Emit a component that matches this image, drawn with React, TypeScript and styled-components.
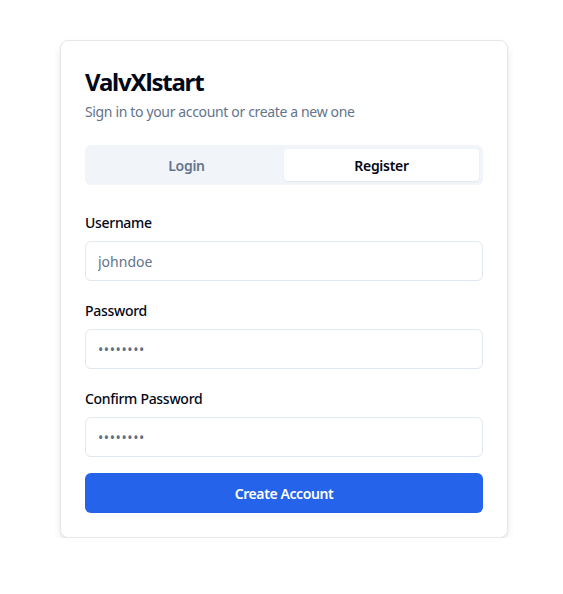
import React from "react";
import styled, { createGlobalStyle } from "styled-components";

const Global = createGlobalStyle`
  * { box-sizing: border-box; }
  html, body { margin: 0; padding: 0; background: #ffffff; }
  body { font-family: "Noto Sans", "Open Sans", sans-serif; color: #020817; }
`;

const Page = styled.div`
  padding: 40px 0 0 60px;
`;

const Card = styled.div`
  width: 448px;
  background: #ffffff;
  border: 1px solid #e5e7eb;
  border-radius: 8px;
  box-shadow: 0 4px 8px -1px rgba(15, 23, 42, 0.1), 0 2px 4px -2px rgba(15, 23, 42, 0.08);
  padding: 25px 24px 24px;
`;

const Title = styled.h1`
  margin: 0;
  font-size: 24px;
  line-height: 32px;
  font-weight: 700;
  letter-spacing: -1.2px;
  color: #020817;
`;

const Subtitle = styled.p`
  margin: 4px 0 0;
  font-size: 14px;
  line-height: 20px;
  letter-spacing: -0.35px;
  color: #64748b;
`;

const TabList = styled.div`
  margin-top: 23px;
  height: 40px;
  padding: 4px;
  background: #f1f5f9;
  border-radius: 6px;
  display: grid;
  grid-template-columns: 1fr 1fr;
`;

const Tab = styled.button<{ $active?: boolean }>`
  border: none;
  border-radius: 4px;
  font-family: inherit;
  font-size: 14px;
  font-weight: 600;
  letter-spacing: -0.3px;
  background: ${(p) => (p.$active ? "#ffffff" : "transparent")};
  color: ${(p) => (p.$active ? "#020817" : "#64748b")};
  box-shadow: ${(p) => (p.$active ? "0 1px 2px rgba(0,0,0,0.06)" : "none")};
  cursor: pointer;
`;

const Form = styled.form`
  margin-top: 28px;
  display: flex;
  flex-direction: column;
  gap: 20px;
`;

const Field = styled.div`
  display: flex;
  flex-direction: column;
  gap: 8px;
`;

const Label = styled.label`
  font-size: 14px;
  line-height: 20px;
  font-weight: 500;
  letter-spacing: -0.3px;
  color: #020817;
`;

const Input = styled.input`
  height: 40px;
  width: 100%;
  border: 1px solid #e2e8f0;
  border-radius: 6px;
  padding: 0 12px;
  font-family: inherit;
  font-size: 14px;
  color: #020817;
  background: #ffffff;
  outline: none;
  &::placeholder {
    color: #64748b;
    opacity: 1;
  }
  &[type="password"]::placeholder {
    letter-spacing: 0.6px;
    color: #5b6f8a;
  }
`;

const Submit = styled.button`
  margin-top: -4px;
  height: 40px;
  width: 100%;
  border: none;
  border-radius: 6px;
  background: #2563eb;
  color: #ffffff;
  font-family: inherit;
  font-size: 14px;
  font-weight: 600;
  letter-spacing: -0.4px;
  cursor: pointer;
`;

export default function App() {
  return (
    <>
      <Global />
      <Page>
        <Card>
          <Title>ValvXlstart</Title>
          <Subtitle>Sign in to your account or create a new one</Subtitle>
          <TabList>
            <Tab type="button">Login</Tab>
            <Tab type="button" $active>
              Register
            </Tab>
          </TabList>
          <Form onSubmit={(e) => e.preventDefault()}>
            <Field>
              <Label htmlFor="username">Username</Label>
              <Input id="username" placeholder="johndoe" />
            </Field>
            <Field>
              <Label htmlFor="password">Password</Label>
              <Input id="password" type="password" placeholder="••••••••" />
            </Field>
            <Field>
              <Label htmlFor="confirm">Confirm Password</Label>
              <Input id="confirm" type="password" placeholder="••••••••" />
            </Field>
            <Submit type="submit">Create Account</Submit>
          </Form>
        </Card>
      </Page>
    </>
  );
}
